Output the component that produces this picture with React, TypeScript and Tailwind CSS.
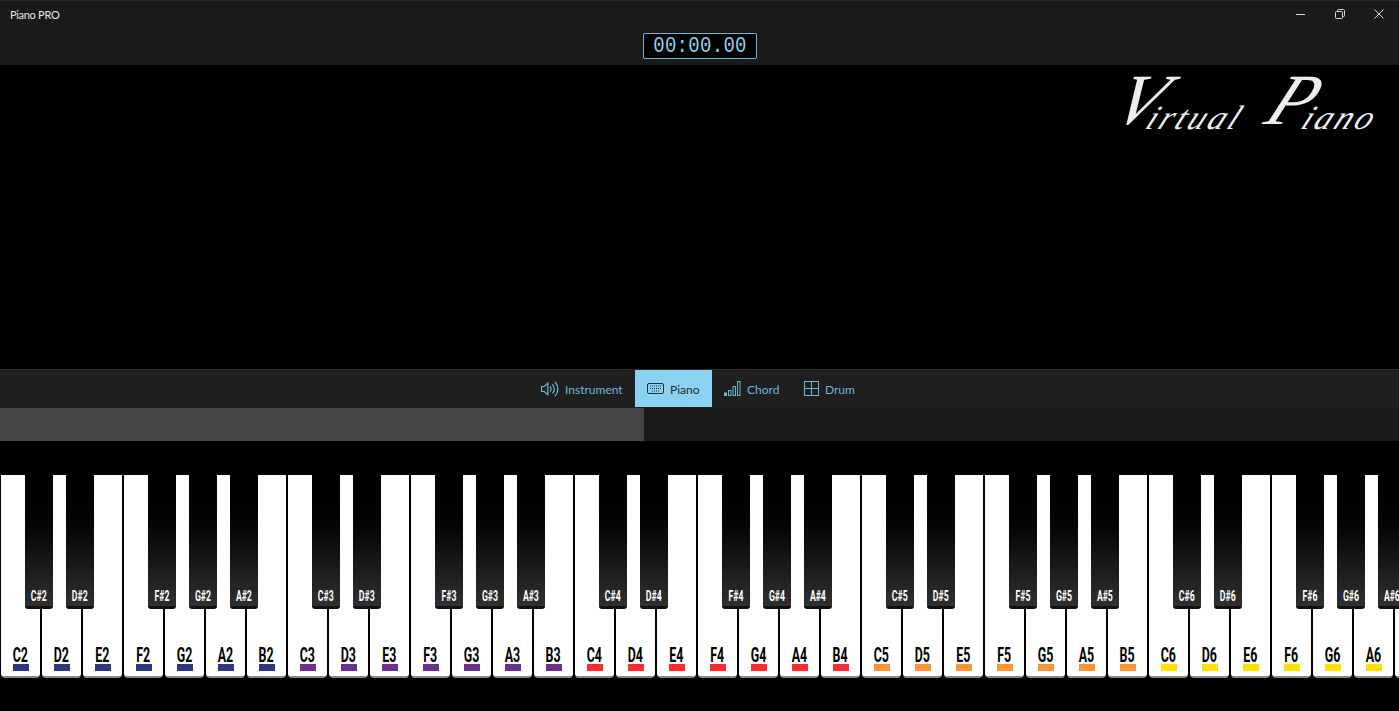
const bands: Record<string, string> = {
  '2': 'bg-[#2e3582]',
  '3': 'bg-[#6a2f8f]',
  '4': 'bg-[#ff2a2a]',
  '5': 'bg-[#ff9433]',
  '6': 'bg-[#ffe000]',
}

const sharps = ['C', 'D', 'F', 'G', 'A']

const notes: string[] = []
for (const octave of ['2', '3', '4', '5', '6']) {
  for (const name of ['C', 'D', 'E', 'F', 'G', 'A', 'B']) {
    notes.push(name + octave)
  }
}

function SpeakerIcon() {
  return (
    <svg width="18" height="16" viewBox="0 0 18 16" fill="none" stroke="currentColor" strokeWidth="1.2">
      <path d="M0.6 5.5h2.6l3.6-3.2v11.4l-3.6-3.2H0.6z" />
      <path d="M9 5.5a3.5 3.5 0 0 1 0 5M11.5 3.5a6.5 6.5 0 0 1 0 9M14 1a10 10 0 0 1 0 14" />
    </svg>
  )
}

function KeyboardIcon() {
  return (
    <svg width="17" height="11" viewBox="0 0 17 11" fill="none" stroke="currentColor">
      <rect x="0.5" y="0.5" width="16" height="10" rx="1.5" />
      <path d="M3 3h11M3 5.5h11M5 8h7" strokeDasharray="1 1" />
    </svg>
  )
}

function BarsIcon() {
  return (
    <svg width="17" height="15" viewBox="0 0 17 15" fill="none" stroke="currentColor">
      <rect x="0.5" y="12" width="2" height="2.5" fill="currentColor" />
      <rect x="4.5" y="9.5" width="2.5" height="5" />
      <rect x="9" y="5.5" width="2.5" height="9" />
      <rect x="13.5" y="0.5" width="2.5" height="14" />
    </svg>
  )
}

function GridIcon() {
  return (
    <svg width="15" height="15" viewBox="0 0 15 15" fill="none" stroke="currentColor">
      <rect x="0.5" y="0.5" width="14" height="14" />
      <path d="M7.5 0.5v14M0.5 7.5h14" />
    </svg>
  )
}

function Tab({ icon, label, width, active }: { icon: React.ReactNode; label: string; width: string; active?: boolean }) {
  return (
    <div
      className={`flex h-[37px] items-center gap-[6px] pl-[12px] text-[12px] ${width} ${
        active ? 'bg-[#8bd2f0] text-[#1c2a33]' : 'text-[#6fb5d3]'
      }`}
    >
      {icon}
      <span className="pt-[2px]">{label}</span>
    </div>
  )
}

function PianoKey({ note }: { note: string }) {
  const name = note[0]
  const octave = note[1]
  return (
    <div className="relative h-[203px] w-[41px] shrink-0 px-px">
      <div className="flex h-full flex-col items-center justify-end rounded-b-[4px] border-b-2 border-[#8a8a8a] bg-white pb-[5px]">
        <span className="inline-block scale-x-[0.62] font-['Roboto'] text-[20px] leading-[16px] font-bold text-black">
          {note}
        </span>
        <div className={`mt-[1px] h-[7px] w-[16px] ${bands[octave]}`} />
      </div>
      {sharps.includes(name) && (
        <div className="absolute top-0 left-[25px] z-10 flex h-[134px] w-[28px] items-end justify-center rounded-b-[3px] border-b-[3px] border-[#111] bg-gradient-to-b from-black to-[#303030] pb-[5px]">
          <span className="inline-block scale-x-[0.62] font-['Roboto'] text-[14px] leading-[10px] font-bold whitespace-nowrap text-white">
            {name}#{octave}
          </span>
        </div>
      )}
    </div>
  )
}

export default function App() {
  return (
    <div className="flex h-[711px] w-[1399px] flex-col overflow-hidden bg-black font-['Lato',sans-serif]">
      {/* Title bar + timer */}
      <div className="relative h-[65px] shrink-0 border-t border-[#2a2a2a] bg-[#1a1a1a]">
        <div className="pt-[6px] pl-[10px] text-[11px] leading-[16px] tracking-[-0.3px] text-[#e6e6e6]">Piano PRO</div>
        <div className="absolute top-0 right-px flex h-[26px] text-[#d8d8d8]">
          <div className="flex w-[39px] items-center justify-center">
            <div className="h-px w-[9px] bg-current" />
          </div>
          <div className="flex w-[39px] items-center justify-center">
            <svg width="10" height="10" viewBox="0 0 10 10" fill="none" stroke="currentColor">
              <rect x="0.5" y="2.5" width="7" height="7" rx="1" />
              <path d="M2.5 2.5V1.5a1 1 0 0 1 1-1h5a1 1 0 0 1 1 1v5a1 1 0 0 1-1 1h-1" />
            </svg>
          </div>
          <div className="flex w-[39px] items-center justify-center">
            <svg width="10" height="10" viewBox="0 0 10 10" stroke="currentColor">
              <path d="M0.5 0.5l9 9M9.5 0.5l-9 9" />
            </svg>
          </div>
        </div>
        <div className="absolute top-[32px] left-[643px] flex h-[26px] w-[114px] items-center justify-center rounded-[2px] border border-[#6fb6d4] bg-black">
          <span className="inline-block scale-y-[1.2] font-['Liberation_Mono'] text-[19px] tracking-[0.3px] text-[#8bd2f0]">
            00:00.00
          </span>
        </div>
      </div>

      {/* Stage */}
      <div className="flex h-[304px] shrink-0 justify-end bg-black pt-[9px] pr-[16px]">
        <div className="flex h-[62px] -skew-x-[25deg] items-end font-['Liberation_Serif'] leading-none font-normal whitespace-nowrap text-[#eeeeee] italic">
          <span className="text-[72px]">V</span>
          <span className="-ml-[6px] pb-[1px] text-[34px] tracking-[3px]">irtual</span>
          <span className="ml-[22px] text-[72px]">P</span>
          <span className="-ml-[4px] pb-[1px] text-[34px] tracking-[3px]">iano</span>
        </div>
      </div>

      {/* Tabs */}
      <div className="flex h-[39px] shrink-0 justify-center border-t border-[#2b2b2b] bg-[#1f1f1f]">
        <Tab icon={<SpeakerIcon />} label="Instrument" width="w-[106px]" />
        <Tab icon={<KeyboardIcon />} label="Piano" width="w-[77px]" active />
        <Tab icon={<BarsIcon />} label="Chord" width="w-[80px]" />
        <Tab icon={<GridIcon />} label="Drum" width="w-[78px]" />
      </div>

      {/* Scroll track */}
      <div className="flex h-[33px] shrink-0 bg-[#1a1a1a]">
        <div className="h-full w-[644px] bg-[#464646]" />
      </div>

      <div className="h-[34px] shrink-0 bg-black" />

      {/* Keyboard */}
      <div className="relative flex overflow-hidden">
        {notes.map((note) => (
          <PianoKey key={note} note={note} />
        ))}
      </div>
    </div>
  )
}
